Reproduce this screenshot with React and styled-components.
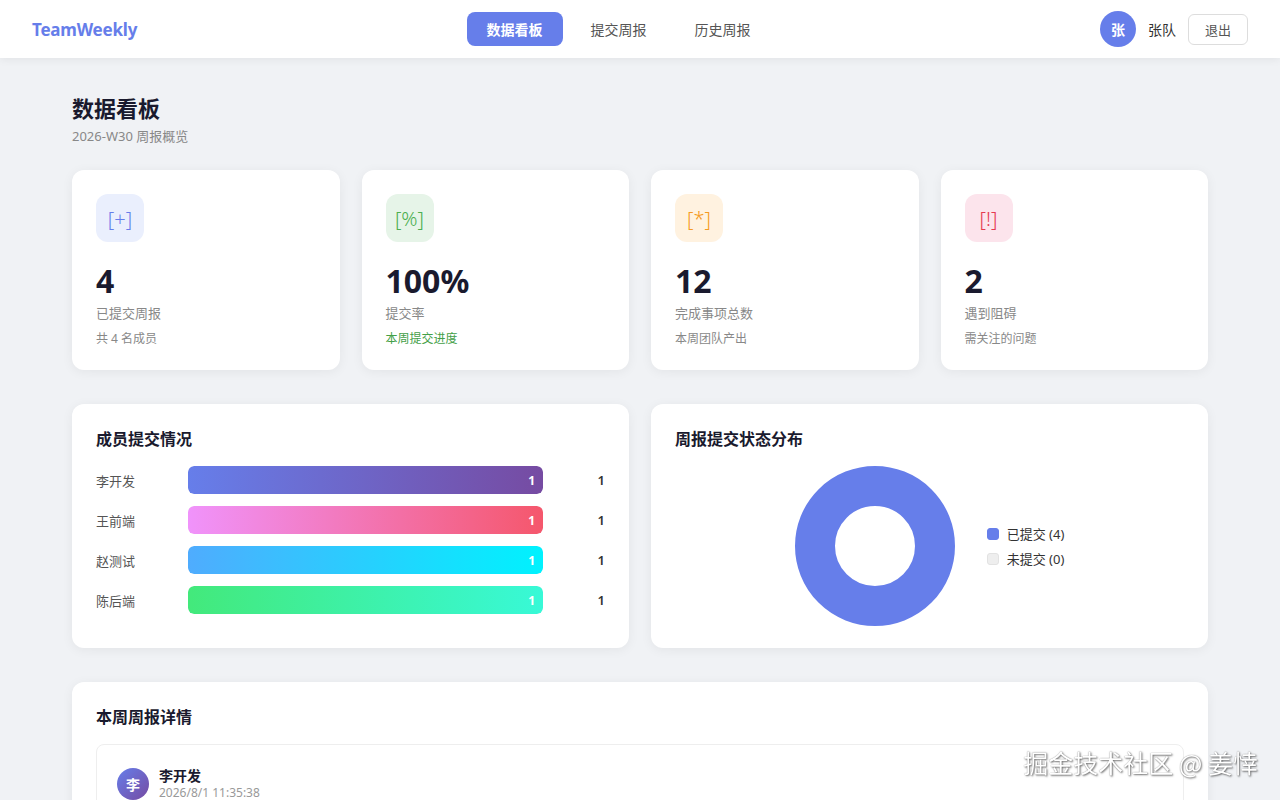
import styled, { createGlobalStyle } from "styled-components";

const GlobalStyle = createGlobalStyle`
    * { box-sizing: border-box; }
    body {
        margin: 0;
        background: #f0f2f5;
        font-family: "Segoe UI", "Noto Sans", "Noto Sans CJK SC", sans-serif;
        color: #333;
    }
`;

const Header = styled.header`
    height: 58px;
    background: #fff;
    box-shadow: 0 2px 8px rgba(0, 0, 0, 0.06);
    display: flex;
    justify-content: space-between;
    align-items: center;
    padding: 0 32px;
`;

const Logo = styled.div`
    font-size: 17px;
    font-weight: 700;
    color: #667eea;
    letter-spacing: -0.2px;
`;

const Nav = styled.nav`
    display: flex;
    gap: 8px;
`;

const NavItem = styled.button`
    border: none;
    height: 34px;
    padding: 0 20px;
    border-radius: 8px;
    font: inherit;
    font-size: 14px;
    background: ${p => (p.$active ? "#667eea" : "transparent")};
    color: ${p => (p.$active ? "#fff" : "#555")};
    font-weight: ${p => (p.$active ? 600 : 400)};
`;

const User = styled.div`
    display: flex;
    align-items: center;
    gap: 12px;
    font-size: 14px;
`;

const Avatar = styled.div`
    width: ${p => p.$size}px;
    height: ${p => p.$size}px;
    border-radius: 50%;
    background: ${p => p.$bg};
    color: #fff;
    font-weight: 700;
    font-size: 14px;
    display: flex;
    align-items: center;
    justify-content: center;
    flex-shrink: 0;
`;

const LogoutBtn = styled.button`
    height: 31px;
    padding: 0 16px;
    border: 1px solid #ddd;
    border-radius: 6px;
    background: #fff;
    font: inherit;
    font-size: 13px;
    color: #555;
`;

const Main = styled.main`
    max-width: 1200px;
    margin: 0 auto;
    padding: 32px 32px 40px;
`;

const PageTitle = styled.h1`
    margin: 0;
    font-size: 22px;
    font-weight: 700;
    color: #1a1a2e;
    line-height: 36px;
`;

const PageSub = styled.p`
    margin: 0 0 24px;
    font-size: 13px;
    color: #888;
    line-height: 20px;
`;

const StatsGrid = styled.div`
    display: grid;
    grid-template-columns: repeat(4, 1fr);
    gap: 22px;
    margin-bottom: 34px;
`;

const Card = styled.div`
    background: #fff;
    border-radius: 12px;
    box-shadow: 0 2px 12px rgba(0, 0, 0, 0.06);
    padding: 24px;
`;

const StatCard = styled(Card)`
    height: 200px;
`;

const IconBox = styled.div`
    width: 48px;
    height: 48px;
    border-radius: 12px;
    background: ${p => p.$bg};
    color: ${p => p.$color};
    font-size: 20px;
    font-weight: 300;
    display: flex;
    align-items: center;
    justify-content: center;
    margin-bottom: 20px;
`;

const StatValue = styled.div`
    font-size: 32px;
    font-weight: 700;
    color: #1a1a2e;
    line-height: 38px;
`;

const StatLabel = styled.div`
    font-size: 13px;
    color: #888;
    margin-top: 3px;
    line-height: 20px;
`;

const StatSub = styled.div`
    font-size: 12px;
    color: ${p => p.$color || "#888"};
    margin-top: 7px;
    line-height: 18px;
`;

const ChartsGrid = styled.div`
    display: grid;
    grid-template-columns: 1fr 1fr;
    gap: 22px;
    margin-bottom: 34px;
`;

const ChartCard = styled(Card)`
    height: 244px;
`;

const CardTitle = styled.h3`
    margin: 0 0 16px;
    font-size: 16px;
    font-weight: 700;
    color: #1a1a2e;
    line-height: 22px;
`;

const BarList = styled.div`
    display: flex;
    flex-direction: column;
    gap: 12px;
`;

const BarRow = styled.div`
    display: flex;
    align-items: center;
    gap: 12px;
    height: 28px;
`;

const BarName = styled.span`
    width: 80px;
    font-size: 13px;
    color: #555;
`;

const BarTrack = styled.div`
    flex: 1;
    height: 28px;
    background: #f0f2f5;
    border-radius: 6px;
    overflow: hidden;
`;

const BarFill = styled.div`
    height: 100%;
    border-radius: 6px;
    background: linear-gradient(90deg, ${p => p.$from}, ${p => p.$to});
    color: #fff;
    font-size: 12px;
    font-weight: 700;
    display: flex;
    align-items: center;
    justify-content: flex-end;
    padding-right: 8px;
`;

const BarCount = styled.span`
    width: 50px;
    text-align: right;
    font-size: 13px;
    font-weight: 600;
    color: #333;
`;

const PieWrap = styled.div`
    display: flex;
    align-items: center;
    justify-content: center;
    gap: 32px;
`;

const Legend = styled.div`
    display: flex;
    flex-direction: column;
    gap: 6px;
`;

const LegendItem = styled.div`
    display: flex;
    align-items: center;
    gap: 8px;
    font-size: 13px;
    color: #333;
`;

const Swatch = styled.span`
    width: 12px;
    height: 12px;
    border-radius: 3px;
    background: ${p => p.$color};
    border: 1px solid ${p => p.$border || p.$color};
`;

const DetailItem = styled.div`
    border: 1px solid #eee;
    border-radius: 8px;
    padding: 22px 20px;
`;

const DetailHead = styled.div`
    display: flex;
    align-items: center;
    gap: 10px;
`;

const DetailName = styled.div`
    font-size: 14px;
    font-weight: 700;
    color: #1a1a2e;
    line-height: 18px;
`;

const DetailTime = styled.div`
    font-size: 12px;
    color: #999;
    line-height: 16px;
`;

const DetailBody = styled.div`
    margin-top: 16px;
    font-size: 13px;
    color: #555;
    line-height: 22px;
`;

const Watermark = styled.div`
    position: fixed;
    right: 22px;
    bottom: 20px;
    font-family: "Noto Sans CJK SC", sans-serif;
    font-size: 25px;
    color: #fff;
    text-shadow: 1px 1px 2px rgba(0, 0, 0, 0.55), 0 0 1px rgba(0, 0, 0, 0.5);
    pointer-events: none;
`;

const stats = [
    { icon: "[+]", bg: "#eaeffd", color: "#667eea", value: "4", label: "已提交周报", sub: "共 4 名成员" },
    { icon: "[%]", bg: "#e6f4e8", color: "#4caf50", value: "100%", label: "提交率", sub: "本周提交进度", subColor: "#43a047" },
    { icon: "[*]", bg: "#fff2e0", color: "#f59a23", value: "12", label: "完成事项总数", sub: "本周团队产出" },
    { icon: "[!]", bg: "#fce4ec", color: "#e53950", value: "2", label: "遇到阻碍", sub: "需关注的问题" },
];

const members = [
    { name: "李开发", count: 1, from: "#667eea", to: "#764ba2" },
    { name: "王前端", count: 1, from: "#f093fb", to: "#f5576c" },
    { name: "赵测试", count: 1, from: "#4facfe", to: "#00f2fe" },
    { name: "陈后端", count: 1, from: "#43e97b", to: "#38f9d7" },
];

const Donut = () => (
    <svg width="160" height="160" viewBox="0 0 160 160">
        <circle cx="80" cy="80" r="60" fill="none" stroke="#667eea" strokeWidth="40" />
    </svg>
);

const App = () => {
    const max = Math.max(...members.map(m => m.count));
    return (
        <>
            <GlobalStyle />
            <Header>
                <Logo>TeamWeekly</Logo>
                <Nav>
                    <NavItem $active>数据看板</NavItem>
                    <NavItem>提交周报</NavItem>
                    <NavItem>历史周报</NavItem>
                </Nav>
                <User>
                    <Avatar $size={36} $bg="#667eea">张</Avatar>
                    <span>张队</span>
                    <LogoutBtn>退出</LogoutBtn>
                </User>
            </Header>
            <Main>
                <PageTitle>数据看板</PageTitle>
                <PageSub>2026-W30 周报概览</PageSub>
                <StatsGrid>
                    {stats.map(s => (
                        <StatCard key={s.label}>
                            <IconBox $bg={s.bg} $color={s.color}>{s.icon}</IconBox>
                            <StatValue>{s.value}</StatValue>
                            <StatLabel>{s.label}</StatLabel>
                            <StatSub $color={s.subColor}>{s.sub}</StatSub>
                        </StatCard>
                    ))}
                </StatsGrid>
                <ChartsGrid>
                    <ChartCard>
                        <CardTitle>成员提交情况</CardTitle>
                        <BarList>
                            {members.map(m => (
                                <BarRow key={m.name}>
                                    <BarName>{m.name}</BarName>
                                    <BarTrack>
                                        <BarFill $from={m.from} $to={m.to} style={{ width: `${(m.count / max) * 100}%` }}>
                                            {m.count}
                                        </BarFill>
                                    </BarTrack>
                                    <BarCount>{m.count}</BarCount>
                                </BarRow>
                            ))}
                        </BarList>
                    </ChartCard>
                    <ChartCard>
                        <CardTitle>周报提交状态分布</CardTitle>
                        <PieWrap>
                            <Donut />
                            <Legend>
                                <LegendItem><Swatch $color="#667eea" />已提交 (4)</LegendItem>
                                <LegendItem><Swatch $color="#eee" $border="#e2e2e2" />未提交 (0)</LegendItem>
                            </Legend>
                        </PieWrap>
                    </ChartCard>
                </ChartsGrid>
                <Card>
                    <CardTitle>本周周报详情</CardTitle>
                    <DetailItem>
                        <DetailHead>
                            <Avatar $size={32} $bg="linear-gradient(135deg, #667eea, #764ba2)">李</Avatar>
                            <div>
                                <DetailName>李开发</DetailName>
                                <DetailTime>2026/8/1 11:35:38</DetailTime>
                            </div>
                        </DetailHead>
                        <DetailBody>完成用户模块接口开发，修复登录态过期问题。</DetailBody>
                    </DetailItem>
                </Card>
            </Main>
            <Watermark>掘金技术社区 @ 姜悻</Watermark>
        </>
    );
};

export default App;
